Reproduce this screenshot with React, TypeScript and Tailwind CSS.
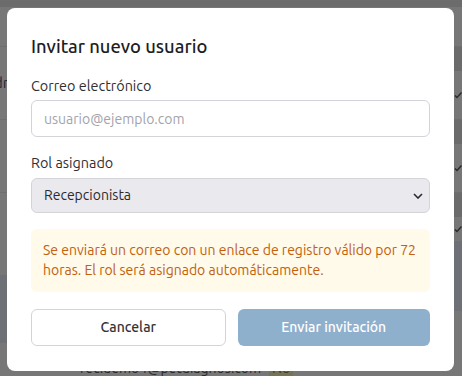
import React from "react";

function Check() {
  return (
    <svg width="8" height="8" viewBox="0 0 8 8" className="block">
      <path d="M1 4.5 L3 6.5 L7.5 1.5" fill="none" stroke="#2a2a2a" strokeWidth="1.4" />
    </svg>
  );
}

export default function App() {
  const font = { fontFamily: "Ubuntu, Roboto, 'Noto Sans', sans-serif" };
  return (
    <div className="relative h-[376px] w-[462px] overflow-hidden bg-[#777777]" style={font}>
      {/* background page seen through the overlay */}
      <div className="flex h-full w-full flex-col">
        <div className="h-[7px] w-full shrink-0 bg-[#6c6c6c]" />
        <div className="flex flex-1">
          <div className="flex flex-1 flex-col">
            <div className="h-[40px] border-b border-[#6e6e6e]" />
            <div className="flex h-[73px] items-center border-b border-[#6e6e6e] text-[15px] text-[#1c2a3a]">
              <span className="-ml-[6px]">dr</span>
            </div>
            <div className="h-[73px] border-b border-[#6e6e6e]" />
            <div className="h-[82px]" />
            <div className="h-[68px] bg-[#6d7075]" />
            <div className="flex h-[26px] items-end pl-[80px] text-[14px] leading-[20px] text-[#2a2a2a]">
              <span className="translate-y-[9px]">rec.demo4@petdiagnos.com</span>
              <span className="ml-[8px] translate-y-[9px] bg-[#767256] px-[3px] text-[#3a3a2a]">No</span>
            </div>
          </div>
          <div className="flex w-[10px] flex-col">
            <div className="h-[40px] border-b border-[#6e6e6e]" />
            <div className="h-[24px] bg-[#6b6b6b]" />
            <div className="flex h-[49px] items-center justify-end border-b border-[#6e6e6e]">
              <Check />
            </div>
            <div className="h-[24px] bg-[#6b6b6b]" />
            <div className="flex h-[49px] items-center justify-end border-b border-[#6e6e6e]">
              <Check />
            </div>
            <div className="h-[24px] bg-[#6b6b6b]" />
            <div className="flex h-[24px] items-center justify-end">
              <Check />
            </div>
            <div className="h-[70px] bg-[#6d7075]" />
            <div className="flex-1" />
          </div>
        </div>
      </div>

      {/* modal */}
      <div className="absolute left-[7px] top-[8px] w-[447px] rounded-lg bg-white px-6 pb-[25px] pt-6">
        <h2 className="text-[18.4px] font-medium leading-[28px] text-[#1d1d1f]">Invitar nuevo usuario</h2>

        <div className="mt-4">
          <label className="mb-1 block text-[14.4px] leading-[20px] text-[#2f2f33]">Correo electrónico</label>
          <input
            type="email"
            placeholder="usuario@ejemplo.com"
            className="block h-[37px] w-full rounded-md border border-[#d3d3da] px-3 text-[14px] text-[#333] outline-none placeholder:text-[#a3a3ab]"
            style={font}
          />
        </div>

        <div className="mt-4">
          <label className="mb-[5px] block text-[14.4px] leading-[20px] text-[#2f2f33]">Rol asignado</label>
          <div className="relative">
            <select
              className="block h-[35px] w-full appearance-none rounded-md border border-[#d3d3da] bg-[#e9e9ee] px-3 text-[14px] text-[#2a2a2e] outline-none"
              style={font}
              defaultValue="Recepcionista"
            >
              <option>Recepcionista</option>
              <option>Administrador</option>
              <option>Veterinario</option>
            </select>
            <svg
              width="10"
              height="6"
              viewBox="0 0 10 6"
              className="pointer-events-none absolute right-[7px] top-[15px]"
            >
              <path d="M1 1 L5 5 L9 1" fill="none" stroke="#2a2a2e" strokeWidth="1.6" />
            </svg>
          </div>
        </div>

        <div className="mt-4 rounded-md bg-[#fffaea] px-3 py-3 text-[14px] leading-[19.5px] text-[#c2600c]">
          <span className="whitespace-nowrap">Se enviará un correo con un enlace de registro válido por 72</span>
          <br />
          horas. El rol será asignado automáticamente.
        </div>

        <div className="mt-[17px] flex gap-3">
          <button className="h-[37px] flex-1 rounded-md border border-[#d3d3da] bg-white text-[14px] font-medium text-[#333338]" style={font}>
            Cancelar
          </button>
          <button className="h-[37px] flex-1 rounded-md bg-[#8fb0cd] text-[14px] font-medium text-white" style={font}>
            Enviar invitación
          </button>
        </div>
      </div>
    </div>
  );
}
